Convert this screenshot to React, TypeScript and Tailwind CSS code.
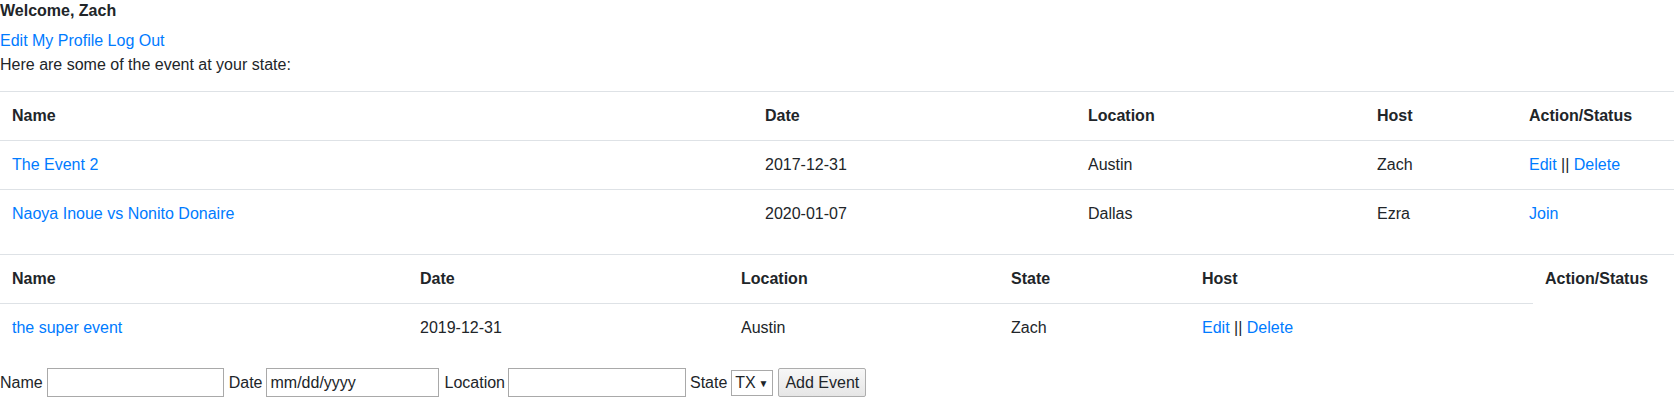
import React from "react";

const th = "px-3 py-3 text-left align-top font-bold border-t border-[#dee2e6] leading-6";
const td = "px-3 py-3 text-left align-top border-t border-[#dee2e6] leading-6";
const link = "text-[#007bff] hover:underline";

export default function App() {
  return (
    <div className="w-[1674px] bg-white text-[16px] leading-6 text-[#212529] font-['Segoe_UI','Liberation_Sans',Arial,sans-serif]">
      <div className="h-[29px] font-bold leading-[22px]">Welcome, Zach</div>
      <div>
        <a href="#" className={link}>Edit My Profile</a>{" "}
        <a href="#" className={link}>Log Out</a>
      </div>
      <p className="mb-[14px]">Here are some of the event at your state:</p>

      <table className="w-full table-fixed border-collapse mb-4">
        <colgroup>
          <col className="w-[753px]" />
          <col className="w-[323px]" />
          <col className="w-[289px]" />
          <col className="w-[152px]" />
          <col className="w-[157px]" />
        </colgroup>
        <tbody>
          <tr>
            <th className={th}>Name</th>
            <th className={th}>Date</th>
            <th className={th}>Location</th>
            <th className={th}>Host</th>
            <th className={th}>Action/Status</th>
          </tr>
          <tr>
            <td className={td}><a href="#" className={link}>The Event 2</a></td>
            <td className={td}>2017-12-31</td>
            <td className={td}>Austin</td>
            <td className={td}>Zach</td>
            <td className={td}>
              <a href="#" className={link}>Edit</a> || <a href="#" className={link}>Delete</a>
            </td>
          </tr>
          <tr>
            <td className={td}><a href="#" className={link}>Naoya Inoue vs Nonito Donaire</a></td>
            <td className={td}>2020-01-07</td>
            <td className={td}>Dallas</td>
            <td className={td}>Ezra</td>
            <td className={td}><a href="#" className={link}>Join</a></td>
          </tr>
        </tbody>
      </table>

      <table className="w-full table-fixed border-collapse mb-4">
        <colgroup>
          <col className="w-[408px]" />
          <col className="w-[321px]" />
          <col className="w-[270px]" />
          <col className="w-[191px]" />
          <col className="w-[343px]" />
          <col className="w-[141px]" />
        </colgroup>
        <tbody>
          <tr>
            <th className={th}>Name</th>
            <th className={th}>Date</th>
            <th className={th}>Location</th>
            <th className={th}>State</th>
            <th className={th}>Host</th>
            <th className={th}>Action/Status</th>
          </tr>
          <tr>
            <td className={td}><a href="#" className={link}>the super event</a></td>
            <td className={td}>2019-12-31</td>
            <td className={td}>Austin</td>
            <td className={td}>Zach</td>
            <td className={td}>
              <a href="#" className={link}>Edit</a> || <a href="#" className={link}>Delete</a>
            </td>
          </tr>
        </tbody>
      </table>

      <form className="flex items-center h-[29px]" onSubmit={(e) => e.preventDefault()}>
        <label className="mr-[4px]">Name</label>
        <input className="w-[177px] h-[29px] border border-[#a9a9a9] px-[2px] outline-none" />
        <label className="ml-[5px] mr-[4px]">Date</label>
        <input
          className="w-[173px] h-[29px] border border-[#a9a9a9] px-[3px] outline-none placeholder:text-[#212529]"
          placeholder="mm/dd/yyyy"
        />
        <label className="ml-[5px] mr-[3px]">Location</label>
        <input className="w-[178px] h-[29px] border border-[#a9a9a9] px-[2px] outline-none" />
        <label className="ml-[4px] mr-[4px]">State</label>
        <div className="relative w-[42px] h-[26px]">
          <select className="appearance-none w-full h-full border border-[#a9a9a9] bg-white pl-[3px] text-[#212529] outline-none">
            <option>TX</option>
          </select>
          <span className="absolute right-[5px] top-[2px] text-[10px] pointer-events-none">▼</span>
        </div>
        <button
          type="submit"
          className="ml-[5px] w-[88px] h-[29px] border border-[#adadad] bg-gradient-to-b from-[#f7f7f7] to-[#e6e6e6] rounded-[2px]"
        >
          Add Event
        </button>
      </form>
    </div>
  );
}
